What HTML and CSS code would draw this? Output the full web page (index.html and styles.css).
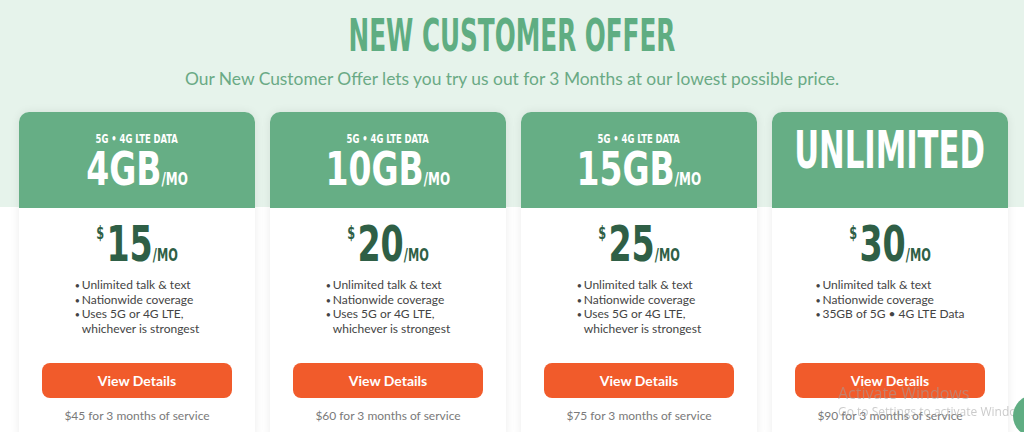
FILE: index.html
```html
<!DOCTYPE html>
<html lang="en">
<head>
    <meta charset="UTF-8">
    <meta name="viewport" content="width=device-width, initial-scale=1.0">
    <title>New Customer Offer</title>
    <link rel="stylesheet" href="styles.css">
</head>
<body>
    <section class="offer">
        <h1 class="title"><span class="squeeze">NEW CUSTOMER OFFER</span></h1>
        <p class="lead">Our New Customer Offer lets you try us out for 3 Months at our lowest possible price.</p>

        <div class="plans">
            <div class="plan">
                <div class="plan-head">
                    <div class="data-label"><span class="squeeze">5G &bull; 4G LTE DATA</span></div>
                    <div class="data-amount"><span class="squeeze">4GB<span class="per">/MO</span></span></div>
                </div>
                <div class="plan-body">
                    <div class="price"><span class="squeeze"><span class="dollar">$</span>15<span class="per">/MO</span></span></div>
                    <ul class="features">
                        <li>Unlimited talk &amp; text</li>
                        <li>Nationwide coverage</li>
                        <li>Uses 5G or 4G LTE,<br>whichever is strongest</li>
                    </ul>
                    <a class="btn" href="#">View Details</a>
                    <p class="total">$45 for 3 months of service</p>
                </div>
            </div>

            <div class="plan">
                <div class="plan-head">
                    <div class="data-label"><span class="squeeze">5G &bull; 4G LTE DATA</span></div>
                    <div class="data-amount"><span class="squeeze">10GB<span class="per">/MO</span></span></div>
                </div>
                <div class="plan-body">
                    <div class="price"><span class="squeeze"><span class="dollar">$</span>20<span class="per">/MO</span></span></div>
                    <ul class="features">
                        <li>Unlimited talk &amp; text</li>
                        <li>Nationwide coverage</li>
                        <li>Uses 5G or 4G LTE,<br>whichever is strongest</li>
                    </ul>
                    <a class="btn" href="#">View Details</a>
                    <p class="total">$60 for 3 months of service</p>
                </div>
            </div>

            <div class="plan">
                <div class="plan-head">
                    <div class="data-label"><span class="squeeze">5G &bull; 4G LTE DATA</span></div>
                    <div class="data-amount"><span class="squeeze">15GB<span class="per">/MO</span></span></div>
                </div>
                <div class="plan-body">
                    <div class="price"><span class="squeeze"><span class="dollar">$</span>25<span class="per">/MO</span></span></div>
                    <ul class="features">
                        <li>Unlimited talk &amp; text</li>
                        <li>Nationwide coverage</li>
                        <li>Uses 5G or 4G LTE,<br>whichever is strongest</li>
                    </ul>
                    <a class="btn" href="#">View Details</a>
                    <p class="total">$75 for 3 months of service</p>
                </div>
            </div>

            <div class="plan">
                <div class="plan-head">
                    <div class="unlimited"><span class="squeeze">UNLIMITED</span></div>
                </div>
                <div class="plan-body">
                    <div class="price"><span class="squeeze"><span class="dollar">$</span>30<span class="per">/MO</span></span></div>
                    <ul class="features">
                        <li>Unlimited talk &amp; text</li>
                        <li>Nationwide coverage</li>
                        <li>35GB of 5G &bull; 4G LTE Data</li>
                    </ul>
                    <a class="btn" href="#">View Details</a>
                    <p class="total">$90 for 3 months of service</p>
                </div>
            </div>
        </div>
    </section>

    <div class="watermark">
        <div class="wm-big">Activate Windows</div>
        <div class="wm-small">Go to Settings to activate Windows.</div>
    </div>
    <div class="chat-bubble"></div>
</body>
</html>
```

FILE: styles.css
```css
body {
    margin: 0;
    font-family: 'Lato', 'Liberation Sans', sans-serif;
    background: linear-gradient(to bottom, #e6f3eb 0, #e6f3eb 207px, #fff 207px);
    overflow: hidden;
}
.squeeze {
    display: inline-block;
    font-family: 'Liberation Sans Narrow', 'DejaVu Sans Condensed', sans-serif;
    font-weight: 700;
    transform: scaleX(0.78);
    white-space: nowrap;
}
.title {
    margin: 0;
    padding-top: 10px;
    font-size: 45px;
    line-height: 48px;
    text-align: center;
    color: #5fad82;
}
.title .squeeze {
    transform: scaleX(0.61);
}
.lead {
    margin: 9px 0 0;
    font-size: 17.4px;
    line-height: 20px;
    text-align: center;
    color: #6aaa85;
}
.plans {
    display: flex;
    gap: 15px;
    padding-left: 19px;
    margin-top: 23px;
}
.plan {
    width: 236px;
    flex-shrink: 0;
    border-radius: 10px;
    overflow: hidden;
    background-color: #fff;
    box-shadow: 0 0 10px rgba(0, 0, 0, 0.08);
}
.plan-head {
    height: 96px;
    box-sizing: border-box;
    padding-top: 20px;
    background-color: #66ae85;
    color: #fff;
    display: flex;
    flex-direction: column;
    align-items: center;
}
.data-label {
    font-size: 12px;
    line-height: 14px;
}
.data-amount {
    margin-top: 1px;
    font-size: 47px;
    line-height: 40px;
}
.per {
    font-size: 17px;
    line-height: 0;
}
.unlimited {
    margin-top: -6px;
    font-size: 52px;
    line-height: 44px;
}
.unlimited .squeeze {
    transform: scaleX(0.655);
}
.plan-body {
    padding: 12px 23px 20px;
    text-align: center;
}
.price {
    font-size: 50px;
    line-height: 44px;
    color: #2f5f46;
}
.price .squeeze {
    transform: scaleX(0.74);
}
.dollar {
    font-size: 17px;
    line-height: 0;
    vertical-align: 22px;
    margin-right: 3px;
}
.features {
    width: max-content;
    margin: 12px auto 0;
    padding: 0;
    height: 58px;
    list-style: none;
    text-align: left;
    font-size: 12px;
    line-height: 14.5px;
    color: #444;
}
.features li {
    padding-left: 7px;
    text-indent: -7px;
}
.features li::before {
    content: "\2022";
    display: inline-block;
    width: 7px;
    text-indent: 0;
    font-size: 9px;
    line-height: 1;
}
.btn {
    display: block;
    margin-top: 27px;
    height: 35px;
    line-height: 35px;
    border-radius: 8px;
    background-color: #f15b2b;
    color: #fff;
    font-weight: 700;
    font-size: 14px;
    text-decoration: none;
}
.total {
    margin: 10px 0 0;
    font-size: 12px;
    line-height: 16px;
    color: #7a7a7a;
}
.watermark {
    position: fixed;
    left: 838px;
    top: 383px;
    color: rgba(160, 160, 160, 0.55);
    font-family: 'Open Sans', sans-serif;
    white-space: nowrap;
}
.wm-big {
    font-size: 16px;
    line-height: 20px;
}
.wm-small {
    font-size: 12px;
    line-height: 18px;
}
.chat-bubble {
    position: fixed;
    left: 1013px;
    top: 395px;
    width: 42px;
    height: 42px;
    border-radius: 50%;
    background-color: #5fad82;
}
```
